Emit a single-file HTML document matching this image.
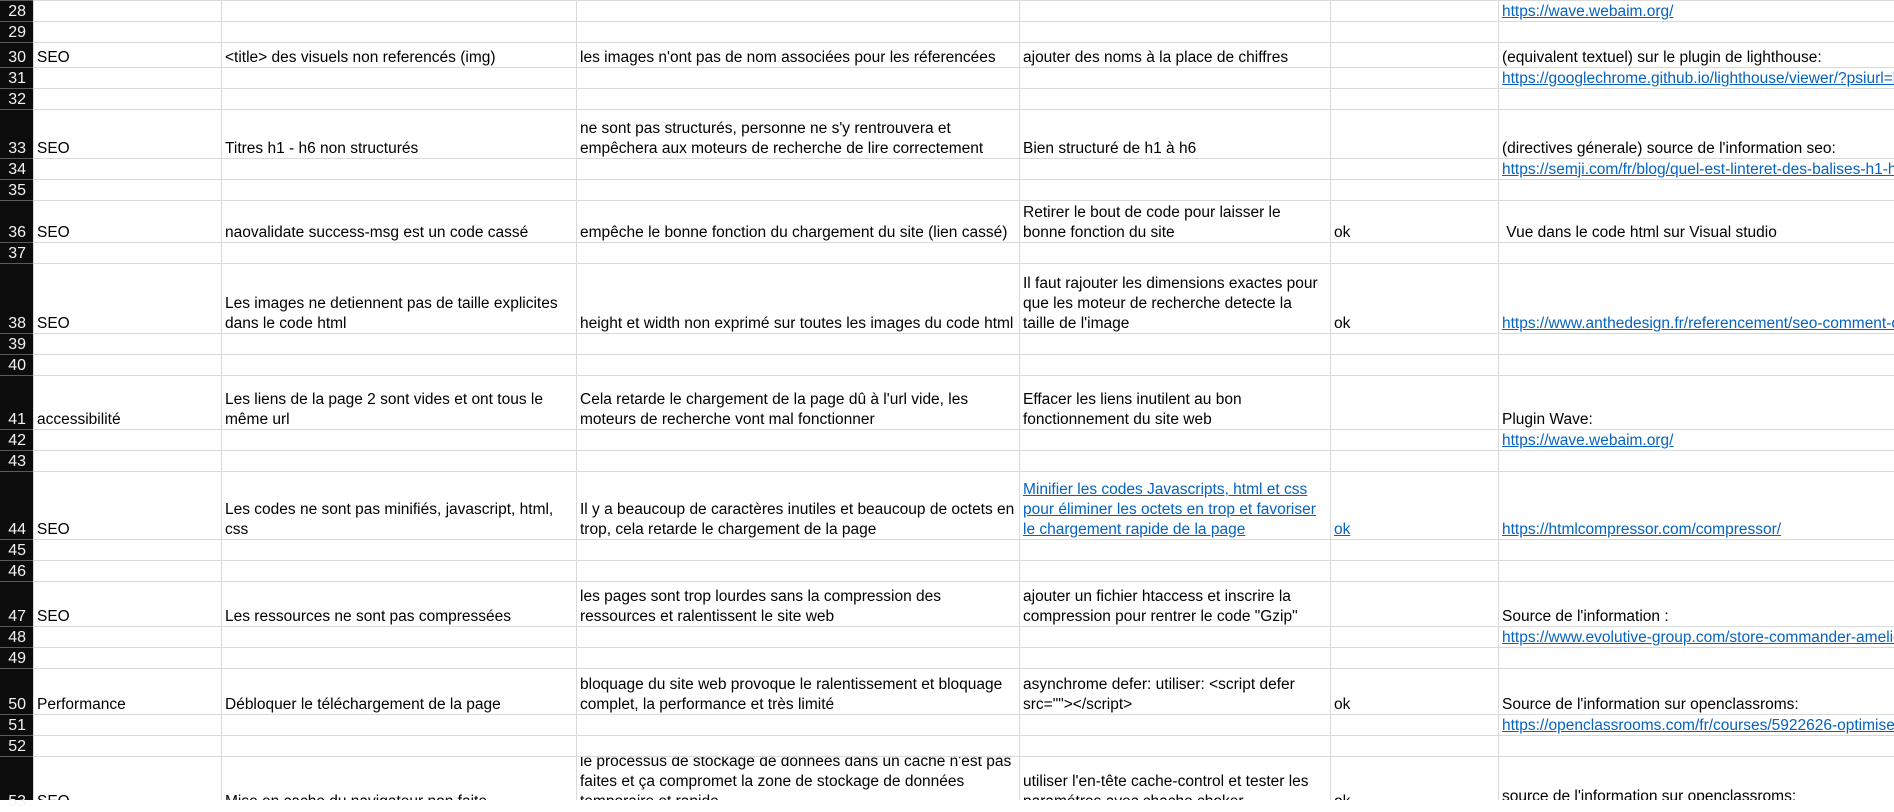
<!DOCTYPE html>
<html><head><meta charset="utf-8"><style>
html,body{margin:0;padding:0;}
body{width:1894px;height:800px;overflow:hidden;position:relative;background:#fff;font-family:"Liberation Sans",Arial,sans-serif;font-size:15.5px;color:#000;}
.hl{position:absolute;left:0;width:1894px;height:1px;background:#dadada;}
.hh{position:absolute;left:0;width:33px;height:1px;background:#5a5a5a;z-index:2;}
.vl{position:absolute;top:0;width:1px;height:800px;background:#dadada;}
#hdr{position:absolute;left:0;top:0;width:33px;height:800px;background:#0c0c0c;z-index:1;}
.n{position:absolute;left:0;width:26px;text-align:right;color:#f2f2f2;line-height:20px;z-index:3;font-size:16px;}
.c{position:absolute;line-height:20px;white-space:nowrap;overflow:hidden;}
.a{left:37px;width:182px}.b{left:225px;width:349px}.cc{left:580px;width:438px}.d{left:1023px;width:306px}.e{left:1334px;width:162px}.f{left:1502px;width:392px}
.l{color:#0563c1;text-decoration:underline;}
</style></head><body>
<div id="hdr"></div>
<div class="hl" style="top:0"></div>
<div class="hl" style="top:21px"></div><div class="hl" style="top:42px"></div><div class="hl" style="top:67px"></div><div class="hl" style="top:88px"></div><div class="hl" style="top:109px"></div><div class="hl" style="top:158px"></div><div class="hl" style="top:179px"></div><div class="hl" style="top:200px"></div><div class="hl" style="top:242px"></div><div class="hl" style="top:263px"></div><div class="hl" style="top:333px"></div><div class="hl" style="top:354px"></div><div class="hl" style="top:375px"></div><div class="hl" style="top:429px"></div><div class="hl" style="top:450px"></div><div class="hl" style="top:471px"></div><div class="hl" style="top:539px"></div><div class="hl" style="top:560px"></div><div class="hl" style="top:581px"></div><div class="hl" style="top:626px"></div><div class="hl" style="top:647px"></div><div class="hl" style="top:668px"></div><div class="hl" style="top:714px"></div><div class="hl" style="top:735px"></div><div class="hl" style="top:756px"></div>
<div class="hh" style="top:0"></div><div class="hh" style="top:21px"></div><div class="hh" style="top:42px"></div><div class="hh" style="top:67px"></div><div class="hh" style="top:88px"></div><div class="hh" style="top:109px"></div><div class="hh" style="top:158px"></div><div class="hh" style="top:179px"></div><div class="hh" style="top:200px"></div><div class="hh" style="top:242px"></div><div class="hh" style="top:263px"></div><div class="hh" style="top:333px"></div><div class="hh" style="top:354px"></div><div class="hh" style="top:375px"></div><div class="hh" style="top:429px"></div><div class="hh" style="top:450px"></div><div class="hh" style="top:471px"></div><div class="hh" style="top:539px"></div><div class="hh" style="top:560px"></div><div class="hh" style="top:581px"></div><div class="hh" style="top:626px"></div><div class="hh" style="top:647px"></div><div class="hh" style="top:668px"></div><div class="hh" style="top:714px"></div><div class="hh" style="top:735px"></div><div class="hh" style="top:756px"></div>
<div class="vl" style="left:33px"></div><div class="vl" style="left:221px"></div><div class="vl" style="left:576px"></div><div class="vl" style="left:1019px"></div><div class="vl" style="left:1330px"></div><div class="vl" style="left:1498px"></div>

<div class="n" style="top:2px">28</div><div class="n" style="top:23px">29</div><div class="n" style="top:48px">30</div><div class="n" style="top:69px">31</div><div class="n" style="top:90px">32</div><div class="n" style="top:139px">33</div><div class="n" style="top:160px">34</div><div class="n" style="top:181px">35</div><div class="n" style="top:223px">36</div><div class="n" style="top:244px">37</div><div class="n" style="top:314px">38</div><div class="n" style="top:335px">39</div><div class="n" style="top:356px">40</div><div class="n" style="top:410px">41</div><div class="n" style="top:431px">42</div><div class="n" style="top:452px">43</div><div class="n" style="top:520px">44</div><div class="n" style="top:541px">45</div><div class="n" style="top:562px">46</div><div class="n" style="top:607px">47</div><div class="n" style="top:628px">48</div><div class="n" style="top:649px">49</div><div class="n" style="top:695px">50</div><div class="n" style="top:716px">51</div><div class="n" style="top:737px">52</div><div class="n" style="top:792px">53</div>

<div class="c f l" style="top:2px">https://wave.webaim.org/</div>

<div class="c a" style="top:48px">SEO</div>
<div class="c b" style="top:48px">&lt;title&gt; des visuels non referencés (img)</div>
<div class="c cc" style="top:48px">les images n'ont pas de nom associées pour les réferencées</div>
<div class="c d" style="top:48px">ajouter des noms à la place de chiffres</div>
<div class="c f" style="top:48px">(equivalent textuel) sur le plugin de lighthouse:</div>
<div class="c f l" style="top:69px">https://googlechrome.github.io/lighthouse/viewer/?psiurl=https</div>

<div class="c a" style="top:139px">SEO</div>
<div class="c b" style="top:139px">Titres h1 - h6 non structurés</div>
<div class="c cc" style="top:119px">ne sont pas structurés, personne ne s'y rentrouvera et<br>empêchera aux moteurs de recherche de lire correctement</div>
<div class="c d" style="top:139px">Bien structuré de h1 à h6</div>
<div class="c f" style="top:139px">(directives génerale) source de l'information seo:</div>
<div class="c f l" style="top:160px">https://semji.com/fr/blog/quel-est-linteret-des-balises-h1-h6/</div>

<div class="c a" style="top:223px">SEO</div>
<div class="c b" style="top:223px">naovalidate success-msg est un code cassé</div>
<div class="c cc" style="top:223px">empêche le bonne fonction du chargement du site (lien cassé)</div>
<div class="c d" style="top:203px">Retirer le bout de code pour laisser le<br>bonne fonction du site</div>
<div class="c e" style="top:223px">ok</div>
<div class="c f" style="top:223px">&nbsp;Vue dans le code html sur Visual studio</div>

<div class="c a" style="top:314px">SEO</div>
<div class="c b" style="top:294px">Les images ne detiennent pas de taille explicites<br>dans le code html</div>
<div class="c cc" style="top:314px">height et width non exprimé sur toutes les images du code html</div>
<div class="c d" style="top:274px">Il faut rajouter les dimensions exactes pour<br>que les moteur de recherche detecte la<br>taille de l'image</div>
<div class="c e" style="top:314px">ok</div>
<div class="c f l" style="top:314px">https://www.anthedesign.fr/referencement/seo-comment-optimiser</div>

<div class="c a" style="top:410px">accessibilité</div>
<div class="c b" style="top:390px">Les liens de la page 2 sont vides et ont tous le<br>même url</div>
<div class="c cc" style="top:390px">Cela retarde le chargement de la page dû à l'url vide, les<br>moteurs de recherche vont mal fonctionner</div>
<div class="c d" style="top:390px">Effacer les liens inutilent au bon<br>fonctionnement du site web</div>
<div class="c f" style="top:410px">Plugin Wave:</div>
<div class="c f l" style="top:431px">https://wave.webaim.org/</div>

<div class="c a" style="top:520px">SEO</div>
<div class="c b" style="top:500px">Les codes ne sont pas minifiés, javascript, html,<br>css</div>
<div class="c cc" style="top:500px">Il y a beaucoup de caractères inutiles et beaucoup de octets en<br>trop, cela retarde le chargement de la page</div>
<div class="c d l" style="top:480px">Minifier les codes Javascripts, html et css <br>pour éliminer les octets en trop et favoriser <br>le chargement rapide de la page</div>
<div class="c e l" style="top:520px">ok</div>
<div class="c f l" style="top:520px">https://htmlcompressor.com/compressor/</div>

<div class="c a" style="top:607px">SEO</div>
<div class="c b" style="top:607px">Les ressources ne sont pas compressées</div>
<div class="c cc" style="top:587px">les pages sont trop lourdes sans la compression des<br>ressources et ralentissent le site web</div>
<div class="c d" style="top:587px">ajouter un fichier htaccess et inscrire la<br>compression pour rentrer le code "Gzip"</div>
<div class="c f" style="top:607px">Source de l'information :</div>
<div class="c f l" style="top:628px">https://www.evolutive-group.com/store-commander-amelioration</div>

<div class="c a" style="top:695px">Performance</div>
<div class="c b" style="top:695px">Débloquer le téléchargement de la page</div>
<div class="c cc" style="top:675px">bloquage du site web provoque le ralentissement et bloquage<br>complet, la performance et très limité</div>
<div class="c d" style="top:675px">asynchrome defer: utiliser: &lt;script defer<br>src=""&gt;&lt;/script&gt;</div>
<div class="c e" style="top:695px">ok</div>
<div class="c f" style="top:695px">Source de l'information sur openclassroms:</div>
<div class="c f l" style="top:716px">https://openclassrooms.com/fr/courses/5922626-optimisez-</div>

<div style="position:absolute;left:0;top:757px;width:1894px;height:43px;overflow:hidden;">
<div class="c a" style="top:35px">SEO</div>
<div class="c b" style="top:35px">Mise en cache du navigateur non faite</div>
<div class="c cc" style="top:-5px">le processus de stockage de données dans un cache n'est pas<br>faites et ça compromet la zone de stockage de données<br>temporaire et rapide</div>
<div class="c d" style="top:15px">utiliser l'en-tête cache-control et tester les<br>paramétres avec chache choker</div>
<div class="c e" style="top:35px">ok</div>
<div class="c f" style="top:30px">source de l'information sur openclassroms:</div>
</div>
</body></html>
